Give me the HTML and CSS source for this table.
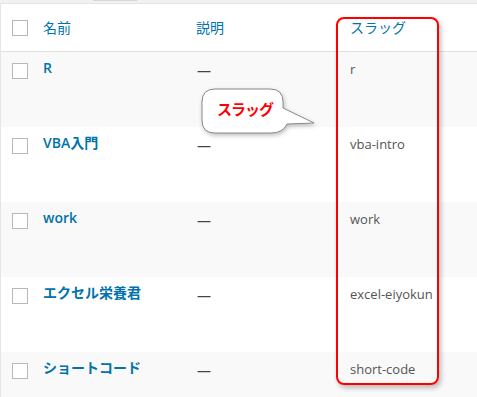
FILE: index.html
```html
<!DOCTYPE html>
<html lang="ja">
<head>
    <meta charset="UTF-8">
    <meta name="viewport" content="width=device-width, initial-scale=1.0">
    <title>タグ一覧</title>
    <link rel="stylesheet" href="styles.css">
</head>
<body>
    <div class="top-strip"><span class="tab-edge"></span></div>

    <div class="list-table">
        <div class="row head">
            <div class="cell check"><span class="box"></span></div>
            <div class="cell"><a class="col-link">名前</a></div>
            <div class="cell"><a class="col-link">説明</a></div>
            <div class="cell"><a class="col-link">スラッグ</a></div>
        </div>

        <div class="row alt">
            <div class="cell check"><span class="box"></span></div>
            <div class="cell"><a class="term-name">R</a></div>
            <div class="cell dash">—</div>
            <div class="cell slug">r</div>
        </div>
        <div class="row">
            <div class="cell check"><span class="box"></span></div>
            <div class="cell"><a class="term-name">VBA入門</a></div>
            <div class="cell dash">—</div>
            <div class="cell slug">vba-intro</div>
        </div>
        <div class="row alt">
            <div class="cell check"><span class="box"></span></div>
            <div class="cell"><a class="term-name">work</a></div>
            <div class="cell dash">—</div>
            <div class="cell slug">work</div>
        </div>
        <div class="row">
            <div class="cell check"><span class="box"></span></div>
            <div class="cell"><a class="term-name">エクセル栄養君</a></div>
            <div class="cell dash">—</div>
            <div class="cell slug">excel-eiyokun</div>
        </div>
        <div class="row alt">
            <div class="cell check"><span class="box"></span></div>
            <div class="cell"><a class="term-name">ショートコード</a></div>
            <div class="cell dash">—</div>
            <div class="cell slug">short-code</div>
        </div>
    </div>

    <!-- annotation: frame round the slug column and a callout -->
    <div class="mark-frame"></div>
    <div class="callout">
        <svg width="120" height="52" viewBox="0 0 120 52">
            <path d="M14 1 H69 Q82 1 82 14 V20 L113 35 L86 36 Q82 45 70 45 H14 Q1 45 1 32 V14 Q1 1 14 1 Z"
                  fill="#fff" stroke="#8a8a8a" stroke-width="1"/>
        </svg>
        <span class="callout-text">スラッグ</span>
    </div>
</body>
</html>
```

FILE: styles.css
```css
body {
    margin: 0;
    background-color: #fff;
    font-family: "Open Sans", "Noto Sans CJK JP", sans-serif;
    font-size: 14px;
    color: #444;
    overflow: hidden;
}

.top-strip {
    height: 3px;
    background-color: #f1f1f1;
    position: relative;
}

.tab-edge {
    display: block;
    margin-left: 93px;
    width: 44px;
    height: 1px;
    background-color: #d6d6d6;
}

.list-table {
    border-top: 1px solid #e5e5e5;
    border-left: 1px solid #e5e5e5;
}

.row {
    display: grid;
    grid-template-columns: 34px 153px 154px 1fr;
    height: 75px;
}

.row.alt {
    background-color: #f9f9f9;
}

.row.head {
    height: 47px;
    border-bottom: 1px solid #e1e1e1;
}

.cell {
    padding: 6px 8px 0;
    line-height: 20px;
}

.head .cell {
    padding-top: 14px;
}

.check {
    padding: 11px 0 0 11px;
}

.head .check {
    padding-top: 16px;
}

.box {
    display: block;
    width: 14px;
    height: 14px;
    border: 1px solid #b4b9be;
    background-color: #fff;
}

.col-link {
    color: #0073aa;
    font-size: 14px;
}

.term-name {
    color: #0073aa;
    font-weight: 600;
    font-size: 14px;
}

.dash {
    padding: 9px 8px 0 9px;
    color: #444;
}

.slug {
    color: #555;
    font-size: 13px;
    padding-top: 7px;
}

.mark-frame {
    position: absolute;
    left: 336px;
    top: 17px;
    width: 99px;
    height: 364px;
    border: 2px solid #ff0000;
    border-radius: 8px;
    box-shadow: 2px 3px 5px rgba(0, 0, 0, 0.25);
}

.callout {
    position: absolute;
    left: 201px;
    top: 88px;
    width: 120px;
    height: 52px;
}

.callout svg {
    display: block;
    filter: drop-shadow(1px 2px 2px rgba(0, 0, 0, 0.25));
}

.callout-text {
    position: absolute;
    left: 16px;
    top: 11px;
    color: #ff0000;
    font-family: "Noto Sans CJK JP", sans-serif;
    font-weight: 700;
    font-size: 15px;
    letter-spacing: -1px;
    line-height: 20px;
}
```
